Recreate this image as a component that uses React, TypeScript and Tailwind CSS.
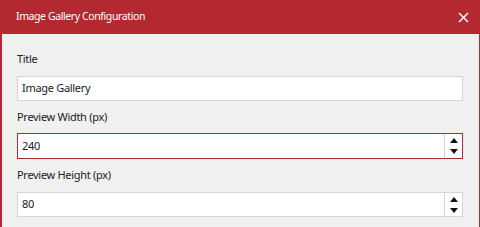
import { useState } from "react"

function Spinner() {
  return (
    <div className="flex w-[18px] flex-col items-center justify-center gap-[6px] border-l border-[#d4d4d8]">
      <svg width="8" height="5" viewBox="0 0 8 5">
        <path d="M4 0L8 5H0Z" fill="#111" />
      </svg>
      <svg width="8" height="5" viewBox="0 0 8 5">
        <path d="M0 0H8L4 5Z" fill="#111" />
      </svg>
    </div>
  )
}

function Field({
  label,
  value,
  numeric,
  focused,
}: {
  label: string
  value: string
  numeric?: boolean
  focused?: boolean
}) {
  const [v, setV] = useState(value)
  return (
    <div className="flex flex-col">
      <label className="h-[16px] text-[11px] leading-[16px] tracking-[-0.3px] text-[#222]">{label}</label>
      <div
        className={
          focused
            ? "mt-[8px] flex h-[26px] border border-[#b3292f] bg-white"
            : "mt-[9px] flex h-[25px] border border-[#d4d4d8] bg-white"
        }
      >
        <input
          value={v}
          onChange={(e) => setV(e.target.value)}
          autoFocus={focused}
          className="min-w-0 flex-1 bg-transparent px-[4px] text-[11px] tracking-[-0.3px] text-[#222] outline-none"
        />
        {numeric && <Spinner />}
      </div>
    </div>
  )
}

export default function App() {
  return (
    <div
      className="flex h-[227px] w-[480px] flex-col overflow-hidden bg-[#f0f0f0]"
      style={{ fontFamily: '"Noto Sans", "Open Sans", sans-serif' }}
    >
      <div className="flex h-[34px] shrink-0 items-center justify-between bg-[#b3292f] pl-[16px] pr-[11px] text-white">
        <span className="text-[10.5px] tracking-[-0.4px]">Image Gallery Configuration</span>
        <svg width="11" height="11" viewBox="0 0 11 11">
          <path d="M1 1L10 10M10 1L1 10" stroke="white" strokeWidth="1.5" />
        </svg>
      </div>
      <div className="flex flex-1 flex-col gap-[8px] border-l-2 border-r border-[#b3292f] pl-[15px] pr-[16px] pt-[17px]">
        <Field label="Title" value="Image Gallery" />
        <Field label="Preview Width (px)" value="240" numeric focused />
        <Field label="Preview Height (px)" value="80" numeric />
      </div>
    </div>
  )
}
